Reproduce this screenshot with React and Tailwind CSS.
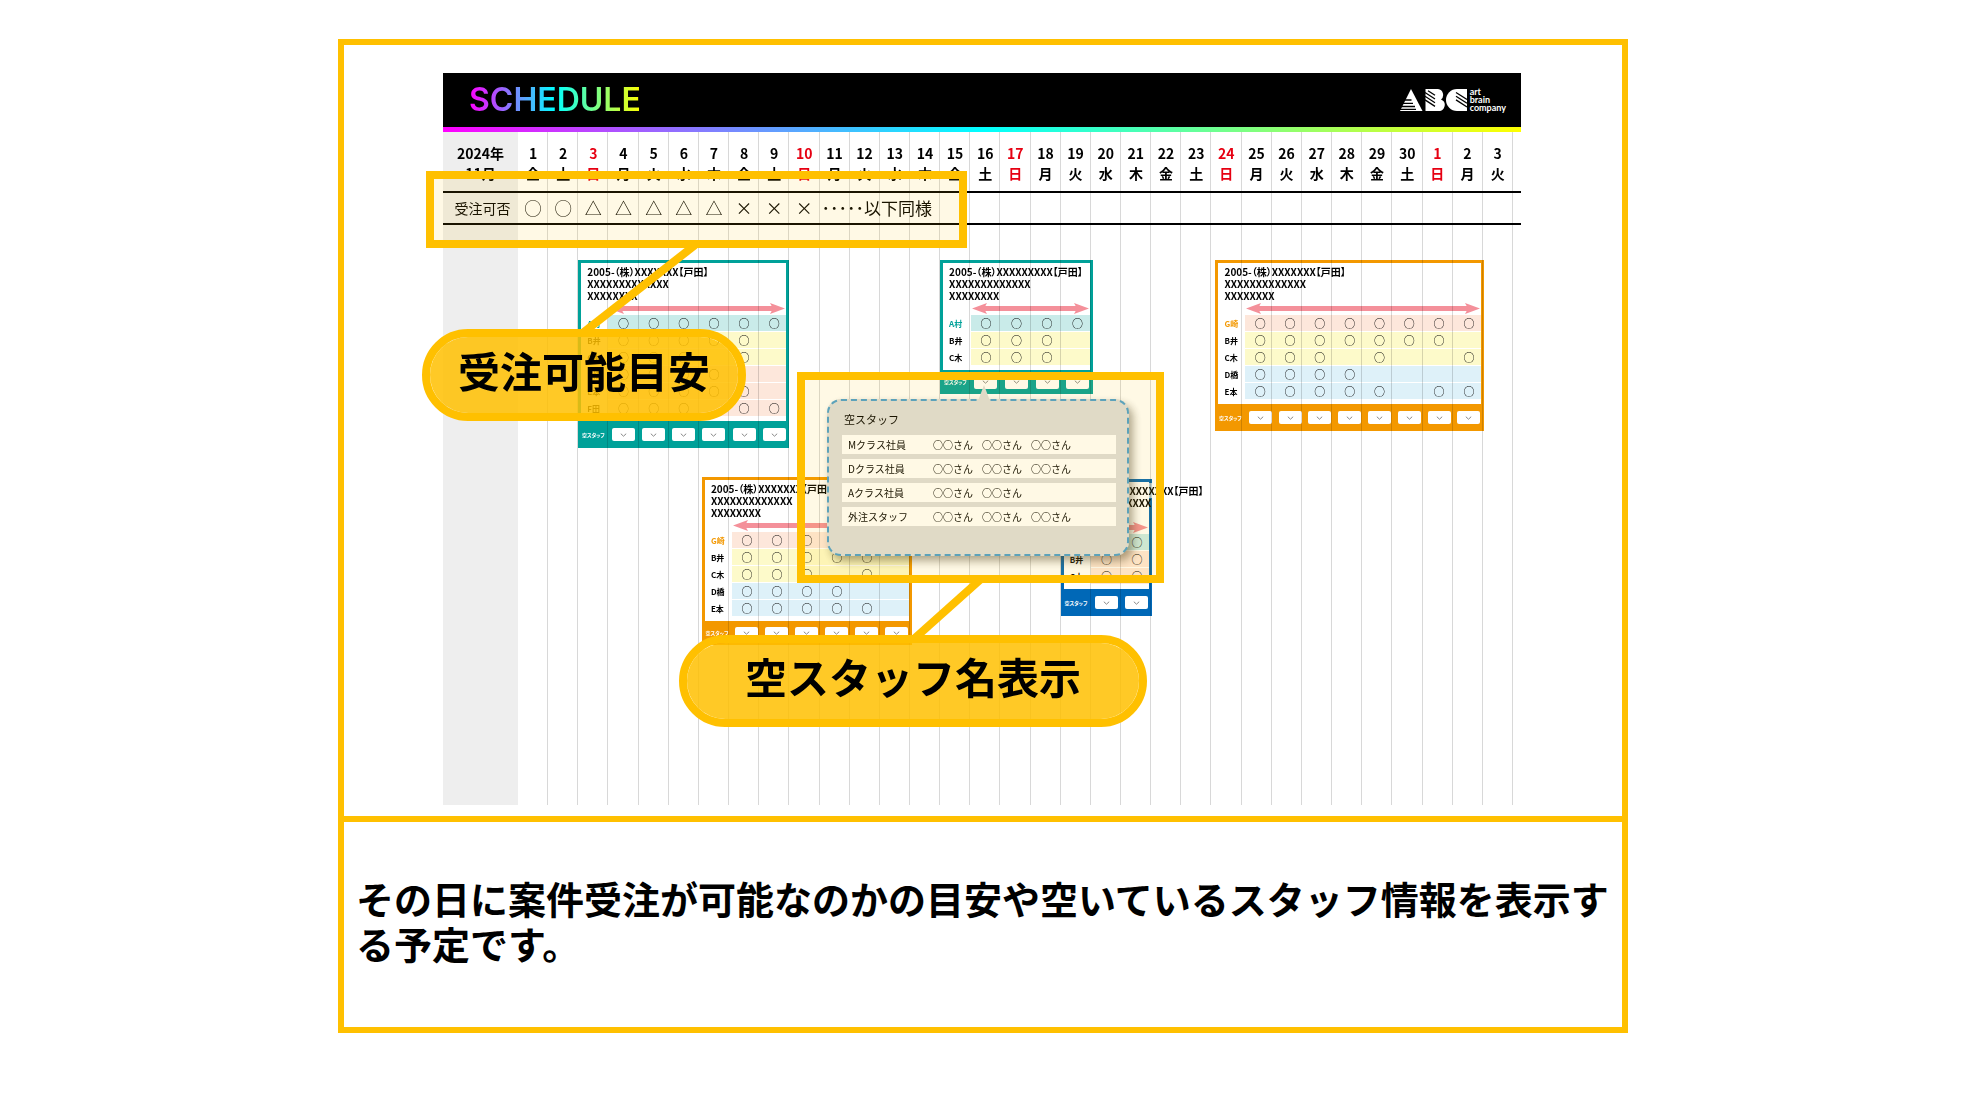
import React from "react";

const WEEK = ["金", "土", "日", "月", "火", "水", "木"];
const DAYS = Array.from({ length: 33 }, (_, i) => ({
  num: i < 30 ? i + 1 : i - 29,
  week: WEEK[i % 7],
  holiday: i % 7 === 2,
}));

const AVAILABILITY = ["◯", "◯", "△", "△", "△", "△", "△", "×", "×", "×"];

const TONES = {
  teal: "bg-[#c9ebe9]",
  yellow: "bg-[#fdfaca]",
  pink: "bg-[#fde7db]",
  blue: "bg-[#def1f9]",
};

const THEMES = {
  teal: { text: "text-[#00a199]", bg: "bg-[#00a199]", frame: "after:border-[#00a199]" },
  orange: { text: "text-[#f39800]", bg: "bg-[#f39800]", frame: "after:border-[#f39800]" },
  blue: { text: "text-[#0068b7]", bg: "bg-[#0068b7]", frame: "after:border-[#0068b7]" },
};

const CARDS = [
  {
    id: "c1",
    place: "col-start-3 col-span-7 row-start-1",
    theme: "teal",
    title: "XXXXXXX",
    footer: "h-[27px]",
    rows: [
      ["A村", "teal", "111111"],
      ["B井", "yellow", "111110"],
      ["C木", "yellow", "111010"],
      ["D橋", "pink", "111100"],
      ["E本", "pink", "111110"],
      ["F田", "pink", "111011"],
    ],
  },
  {
    id: "c2",
    place: "col-start-15 col-span-5 row-start-1 -mr-0.5",
    theme: "teal",
    title: "XXXXXXXXX",
    footer: "h-6",
    rows: [
      ["A村", "teal", "1111"],
      ["B井", "yellow", "1110"],
      ["C木", "yellow", "1110"],
    ],
  },
  {
    id: "c3",
    place: "col-start-24 col-span-9 row-start-1 ml-1 -mr-px",
    theme: "orange",
    title: "XXXXXXX",
    footer: "h-[27px]",
    rows: [
      ["G崎", "pink", "11111111"],
      ["B井", "yellow", "11111110"],
      ["C木", "yellow", "11101001"],
      ["D橋", "blue", "11110000"],
      ["E本", "blue", "11111011"],
    ],
  },
  {
    id: "c4",
    place: "col-start-7 col-span-7 row-start-2 ml-[3px] -mr-0.5",
    theme: "orange",
    title: "XXXXXXX",
    footer: "h-6",
    rows: [
      ["G崎", "pink", "111111"],
      ["B井", "yellow", "111110"],
      ["C木", "yellow", "111010"],
      ["D橋", "blue", "111100"],
      ["E本", "blue", "111110"],
    ],
  },
  {
    id: "c5",
    place: "col-start-19 col-span-3 row-start-2 mt-0.5 -mr-px",
    theme: "blue",
    title: "XXXXXXXXX",
    footer: "h-[27px]",
    rows: [
      ["A村", "teal", "11"],
      ["B井", "pink", "11"],
      ["C木", "pink", "11"],
    ],
  },
];

const STAFF = [
  ["Mクラス社員", 3],
  ["Dクラス社員", 3],
  ["Aクラス社員", 2],
  ["外注スタッフ", 3],
];

function Arrow() {
  return (
    <div className="flex h-[13px] items-center pr-1 pl-px">
      <svg width="15" height="11" viewBox="0 0 15 11" className="shrink-0 fill-[#f4909a]">
        <path d="M0 5.5 L15 0 L12 5.5 L15 11 Z" />
      </svg>
      <div className="-mx-1 h-[5px] flex-1 bg-[#f4909a]" />
      <svg width="15" height="11" viewBox="0 0 15 11" className="shrink-0 fill-[#f4909a]">
        <path d="M15 5.5 L0 0 L3 5.5 L0 11 Z" />
      </svg>
    </div>
  );
}

function Card({ card }) {
  const theme = THEMES[card.theme];
  const count = card.rows[0][2].length;
  return (
    <article
      className={`relative self-start bg-white pt-1.5 mix-blend-multiply after:pointer-events-none after:absolute after:inset-0 after:border-[3px] ${theme.frame} ${card.place}`}
    >
      <h2 className="relative z-10 h-9 pl-[9px] text-[10px] leading-3 font-bold whitespace-nowrap">
        <span className="bg-white/70">2005-（株）{card.title}【戸田】</span>
        <br />
        XXXXXXXXXXXXX
        <br />
        XXXXXXXX
      </h2>
      <table className="w-full table-fixed border-separate border-spacing-0">
        <thead>
          <tr>
            <td className="p-0" />
            <td className="p-0" colSpan={count}>
              <Arrow />
            </td>
          </tr>
        </thead>
        <tbody>
          {card.rows.map(([name, tone, marks], r) => (
            <tr key={name} className="h-[17px]">
              <th
                scope="row"
                className={`p-0 pl-[9px] text-left text-[8px] leading-4 font-bold whitespace-nowrap ${r === 0 ? theme.text : "text-black"}`}
              >
                {name}
              </th>
              {marks.split("").map((m, i) => (
                <td
                  key={i}
                  className={`border-b border-white p-0 text-center text-[11px] leading-4 text-black ${TONES[tone]}`}
                >
                  {m === "1" ? "○" : ""}
                </td>
              ))}
            </tr>
          ))}
        </tbody>
        <tfoot>
          <tr className="h-1">
            <td className="p-0" colSpan={count + 1} />
          </tr>
          <tr className={`${card.footer} ${theme.bg}`}>
            <th scope="row" className="p-0 text-center text-[5px] leading-3 font-bold whitespace-nowrap text-white">
              空スタッフ
            </th>
            {card.rows[0][2].split("").map((_, i) => (
              <td key={i} className="p-0">
                <button
                  type="button"
                  aria-label="空スタッフを表示"
                  className="mx-auto flex h-[13px] w-[23px] items-center justify-center rounded-xs bg-white"
                >
                  <svg width="7" height="4" viewBox="0 0 7 4" fill="none" stroke="#888" strokeWidth="1">
                    <path d="M0.8 0.7 L3.5 3.2 L6.2 0.7" />
                  </svg>
                </button>
              </td>
            ))}
          </tr>
        </tfoot>
      </table>
    </article>
  );
}

function BrandLogo() {
  return (
    <div className="flex items-center gap-[3px] text-white">
      <svg width="67" height="22" viewBox="0 0 67 22" role="img" aria-label="ABC">
        <g fill="#fff">
          <path d="M11 0 L22.5 22 H0 Z" />
          <path d="M25.500 0 H38 A6 6 0 0 1 41 10.500 A6 6 0 0 1 38 22 H25.500 Z" />
          <path d="M67 0 V22 H57 A11 11 0 0 1 57 0 Z" />
        </g>
        <g stroke="#000" strokeWidth="1.300" fill="none">
          <path d="M5 11 H11.500 M3 14.300 H13 M1 17.500 H15 M0 20.300 H16" />
          <path d="M25 3.500 L35 10 M25 7.200 L35 13.700 M25 10.900 L35 17.400 M28 1.800 L35 6.300" />
          <path d="M56 3.500 L67 10.500 M56 7.200 L67 14.200 M56 10.900 L67 17.900" />
        </g>
      </svg>
      <p className="font-['Lato',sans-serif] text-[9px] leading-[8px] font-bold">
        art
        <br />
        brain
        <br />
        company
      </p>
    </div>
  );
}

function Calendar() {
  return (
    <table className="relative w-full table-fixed border-collapse">
      <colgroup>
        <col className="w-[75px]" />
        {DAYS.map((_, i) => (
          <col key={i} />
        ))}
        <col className="w-2" />
      </colgroup>
      <thead>
        <tr className="h-[60px] align-top text-[14px] leading-5">
          <th scope="col" className="p-0 pt-[11px] text-center font-bold">
            2024年
            <br />
            11月
          </th>
          {DAYS.map((d, i) => (
            <th
              key={i}
              scope="col"
              className={`p-0 pt-[11px] text-center font-bold ${d.holiday ? "text-[#e60012]" : "text-black"}`}
            >
              {d.num}
              <br />
              {d.week}
            </th>
          ))}
          <td className="p-0" />
        </tr>
      </thead>
      <tbody>
        <tr className="h-[32px] border-y-2 border-black text-[17px] leading-5 text-black">
          <th scope="row" className="p-0 pl-1 text-center text-[14px] font-normal whitespace-nowrap">
            受注可否
          </th>
          {AVAILABILITY.map((a, i) => (
            <td key={i} className="p-0 text-center">
              {a}
            </td>
          ))}
          <td className="p-0 pl-0.5 whitespace-nowrap" colSpan={24}>
            ･････以下同様
          </td>
        </tr>
      </tbody>
    </table>
  );
}

function StaffPopup() {
  return (
    <div className="absolute top-[27px] left-[30px] w-[302px] rounded-[14px] border-2 border-dashed border-[#4a9fd0] bg-[#dddddd] pt-2 pr-[11px] pb-[23px] pl-[13px] shadow-[4px_5px_8px_rgba(60,50,30,0.45)]">
      <svg width="12" height="16" viewBox="0 0 12 16" className="absolute -top-4 left-[149px] fill-[#dddddd]">
        <path d="M6 0 L12 16 H0 Z" />
      </svg>
      <h3 className="pl-0.5 text-[11px] leading-5">空スタッフ</h3>
      <table className="mt-1.5 w-full table-fixed border-separate border-spacing-0 text-[10px] leading-[19px]">
        <colgroup>
          <col className="w-[91px]" />
          <col className="w-[49px]" />
          <col className="w-[49px]" />
          <col />
        </colgroup>
        <tbody>
          {STAFF.map(([label, n]) => (
            <tr key={label}>
              <th scope="row" className="border-b-[5px] border-[#dddddd] bg-white p-0 pl-1.5 text-left font-normal">
                {label}
              </th>
              {[0, 1, 2].map((i) => (
                <td key={i} className="border-b-[5px] border-[#dddddd] bg-white p-0 whitespace-nowrap">
                  {i < n ? "○○さん" : ""}
                </td>
              ))}
            </tr>
          ))}
        </tbody>
      </table>
    </div>
  );
}

function Callouts() {
  return (
    <>
      <div className="absolute top-[98px] -left-[17px] h-[77px] w-[541px] border-8 border-[#ffc000] bg-[#ffc000]/10" />
      <div className="absolute top-[299px] left-[354px] h-[211px] w-[367px]">
        <StaffPopup />
        <div className="absolute inset-0 border-8 border-[#ffc000] bg-[#ffc000]/10" />
      </div>
      <svg width="130" height="96" viewBox="0 0 130 96" className="absolute top-[170px] left-[135px]">
        <path d="M117 2 L6 89" stroke="#ffc000" strokeWidth="8" />
      </svg>
      <svg width="90" height="70" viewBox="0 0 90 70" className="absolute top-[505px] left-[460px]">
        <path d="M78 1 L12 60" stroke="#ffc000" strokeWidth="8" />
      </svg>
      <p className="absolute top-[256px] -left-[21px] flex h-[92px] w-[324px] items-center justify-center rounded-full border-8 border-[#ffc000] bg-[#ffc000]/85 bg-clip-padding pb-2.5 text-[42px] leading-none font-bold">
        受注可能目安
      </p>
      <p className="absolute top-[562px] left-[236px] flex h-[92px] w-[468px] items-center justify-center rounded-full border-8 border-[#ffc000] bg-[#ffc000]/85 bg-clip-padding pb-2.5 text-[42px] leading-none font-bold">
        空スタッフ名表示
      </p>
    </>
  );
}

export default function App() {
  return (
    <main
      lang="ja"
      className="min-h-screen bg-white pt-[39px] font-['Noto_Sans_CJK_JP',sans-serif] text-black"
    >
      <div className="mx-auto max-w-[1290px] border-6 border-[#ffc000]">
        <section className="pt-7 pr-[101px] pb-[11px] pl-[99px]">
          <div className="relative">
            <header className="flex h-[54px] items-center justify-between bg-black pr-[15px] pl-[26px]">
              <h1 className="bg-linear-to-r/srgb from-[#ff00ff] via-[#00ffff] to-[#ffff00] bg-clip-text font-['Inter',sans-serif] text-[32px] leading-9 font-semibold text-transparent">
                SCHEDULE
              </h1>
              <BrandLogo />
            </header>
            <div className="h-[5px] bg-linear-to-r/srgb from-[#ff00ff] via-[#00ffff] to-[#ffff00]" />
            <div className="relative isolate">
              <div className="absolute inset-0 flex pr-2" aria-hidden="true">
                <div className="w-[75px] bg-[#eeeeee]" />
                <div className="grid flex-1 grid-cols-[repeat(33,minmax(0,1fr))]">
                  {DAYS.map((_, i) => (
                    <div key={i} className="border-r border-[#d8d8d8]" />
                  ))}
                </div>
              </div>
              <Calendar />
              <div className="mr-2 ml-[75px] grid grid-cols-[repeat(33,minmax(0,1fr))] gap-y-[29px] pt-[35px] pb-[160px] [font-feature-settings:'palt']">
                {CARDS.map((c) => (
                  <Card key={c.id} card={c} />
                ))}
              </div>
            </div>
            <Callouts />
          </div>
        </section>
        <section className="flex min-h-[211px] items-center border-t-6 border-[#ffc000] px-3 pb-2.5">
          <p className="text-[38px] leading-[45px] font-bold">
            その日に案件受注が可能なのかの目安や空いているスタッフ情報を表示する予定です。
          </p>
        </section>
      </div>
    </main>
  );
}
